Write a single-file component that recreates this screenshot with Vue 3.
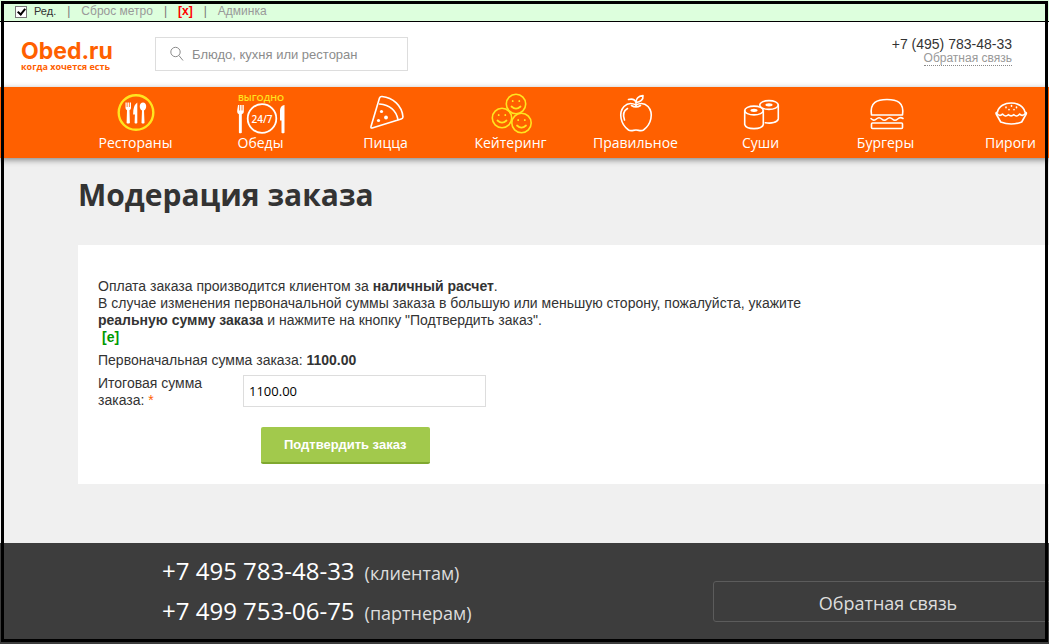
<script setup>
import { ref } from 'vue'

const editMode = ref(true)
const query = ref('')
const total = ref('1100.00')

const categories = [
  { id: 'restaurants', label: 'Рестораны' },
  { id: 'lunch', label: 'Обеды' },
  { id: 'pizza', label: 'Пицца' },
  { id: 'catering', label: 'Кейтеринг' },
  { id: 'healthy', label: 'Правильное' },
  { id: 'sushi', label: 'Суши' },
  { id: 'burgers', label: 'Бургеры' },
  { id: 'pies', label: 'Пироги' },
]

const phones = [
  { number: '+7 495 783-48-33', note: '(клиентам)' },
  { number: '+7 499 753-06-75', note: '(партнерам)' },
]
</script>

<template>
  <div class="page">
    <div class="admin">
      <label class="edit"><input v-model="editMode" type="checkbox" class="tick" />Ред.</label>
      <span class="bar">|</span>
      <a href="#">Сброс метро</a>
      <span class="bar">|</span>
      <a href="#" class="close">[x]</a>
      <span class="bar">|</span>
      <a href="#">Админка</a>
    </div>

    <header class="header">
      <a href="#" class="logo">
        <span class="logo-name">Obed.ru</span>
        <span class="logo-tag">когда хочется есть</span>
      </a>
      <form class="search" @submit.prevent>
        <svg width="14" height="16" viewBox="0 0 14 16" fill="none" stroke="#8a8a8a" aria-hidden="true">
          <circle cx="5.5" cy="6" r="4.7" />
          <path d="M9 9.6 13 14.5" />
        </svg>
        <input v-model="query" type="text" aria-label="Поиск" placeholder="Блюдо, кухня или ресторан" />
      </form>
      <div class="contact">
        <span class="contact-phone">+7 (495) 783-48-33</span>
        <a href="#">Обратная связь</a>
      </div>
    </header>

    <nav class="nav">
      <a v-for="c in categories" :key="c.id" href="#" class="item">
        <svg class="icon" width="50" height="44" viewBox="0 0 50 44" fill="none" stroke="#fff" stroke-width="1.6" stroke-linecap="round" stroke-linejoin="round" aria-hidden="true">
          <g v-if="c.id === 'restaurants'">
            <circle cx="25" cy="22.5" r="17.3" stroke="#ffe51f" stroke-width="2.4" />
            <g fill="#fff" stroke="none">
              <path d="M14.500 12.500h1.200v4.500h.8v-4.500h1.400v4.500h.8v-4.500h1.300v5.500q0 1.600-1.500 2.300l.4 12.700q-1.700 1-3.300 0l.4-12.700q-1.500-.7-1.500-2.300z" />
              <path d="M26.300 12.600v20.400q-1.500 1-2.700 0l.3-8.500h-1.800q-.3-8.500 4.200-11.900z" />
              <path d="M32 12.500c3.800 0 4.300 6.300 1 8l.5 12.500q-1.600 1-3 0l.5-12.500c-3.300-1.700-2.800-8 1-8z" />
            </g>
          </g>
          <g v-else-if="c.id === 'lunch'">
            <text x="25" y="11" class="tag">ВЫГОДНО</text>
            <circle cx="26" cy="28.5" r="14.3" stroke-width="1.8" />
            <text x="26" y="32.5" class="hours">24/7</text>
            <g fill="#fff" stroke="none">
              <path d="M2 15h1.300v5.500h.8v-5.500h1.500v5.500h.8v-5.500h1.400v7q0 1.500-2 2.200v18.500q-1.800 1.300-2.900 0v-18.500q-1.700-.7-1.700-2.200v-1.500z" />
              <path d="M48.500 15v27.800q-1.600 1-3 0v-12.300h-1.500v-10.500q.5-4.500 4.500-5z" />
            </g>
          </g>
          <g v-else-if="c.id === 'pizza'">
            <path d="M21 6.500c11 1 20 9 21 20.500q-.2 1.500-1.800 2l-29 9q-1.700.3-1.200-1.500l8.500-28.500q.7-1.700 2.500-1.500z" />
            <path d="M18.500 14q15.500 1.500 18.500 15.500" />
            <g fill="#fff" stroke="none"><circle cx="20.5" cy="21.5" r="1.6" /><circle cx="25" cy="27.5" r="1.9" /><circle cx="17.5" cy="30.5" r="1.6" /></g>
          </g>
          <g v-else-if="c.id === 'catering'" stroke="#ffe51f">
            <g v-for="p in [[30, 14], [16, 28], [35.5, 33]]" :key="p[0]" :transform="`translate(${p[0]} ${p[1]})`">
              <circle r="9.7" />
              <path d="M-4.500 2.500Q0 6.800 4.500 2.500M-3.300-3v.2M3.300-3v.2" stroke-width="1.8" />
            </g>
          </g>
          <g v-else-if="c.id === 'healthy'">
            <path d="M25 15c-3-1.500-8-2.500-12 1.500-6 6.500-3.200 18 4.500 23.500 2.500 1.600 5 0 7.500 0s5 1.600 7.500 0c7.700-5.500 10.500-17 4.500-23.500-4-4-9-3-12-1.500z" />
            <path d="M20.500 15.500q4.500 3 9 0M25 16v-3.500q-1.500-4.500-7.500-3M25 12.500c0-4.500 2.500-6.500 7-7 .5 4-2.500 6.500-7 7zM13.500 30q-3-8 3-11.500" />
          </g>
          <g v-else-if="c.id === 'sushi'">
            <ellipse cx="33" cy="15" rx="9.3" ry="4.4" /><ellipse cx="33" cy="14.8" rx="2.8" ry=".8" />
            <path d="M42.300 15v14c-1 3.500-7 4.800-13 3.700" />
            <ellipse cx="18" cy="20.500" rx="9.3" ry="4.4" /><ellipse cx="18" cy="20.300" rx="2.8" ry=".8" />
            <path d="M8.700 20.500v14c1.500 5.500 17.100 5.500 18.600 0v-14" />
          </g>
          <g v-else-if="c.id === 'burgers'">
            <path d="M10.500 25c-2-13 6-15.500 15.500-15.500s17.500 2.500 15.500 15.500zM10 28.500q2.700 3 5.400.5 2.600-2.500 5.300 0t5.300 0q2.600-2.500 5.300 0t5.300 0q2.700-2.500 5.400-.5" />
            <rect x="10.500" y="33" width="31" height="5.5" rx="1" />
          </g>
          <g v-else>
            <path d="M11.500 22q-2 .5-1.300 2l4.500 8q10.500 4 21 0l4.500-8q.7-1.500-1.300-2c-2.500-12-25-12-27.400 0z" />
            <path d="M11 23.500q3 3.500 5.500.5 3 3.500 5.800.7 2.800 2.500 5.600 0 2.800 2.800 5.800-.7 2.500 3 5.500-.5M20 17v.8M25.500 15.500v.8M30.500 17v.8M23 19.500v.3M28 19.500v.3" />
          </g>
        </svg>
        <span>{{ c.label }}</span>
      </a>
    </nav>

    <main class="main">
      <h1>Модерация заказа</h1>
      <section class="card">
        <p>
          Оплата заказа производится клиентом за <b>наличный расчет</b>.<br />
          В случае изменения первоначальной суммы заказа в большую или меньшую сторону, пожалуйста, укажите
          <b>реальную сумму заказа</b> и нажмите на кнопку "Подтвердить заказ".
        </p>
        <a href="#" class="edit-link">[e]</a>
        <p class="initial">Первоначальная сумма заказа: <b>1100.00</b></p>
        <form @submit.prevent>
          <div class="field">
            <label for="total">Итоговая сумма заказа: <span class="star">*</span></label>
            <input id="total" v-model="total" type="text" />
          </div>
          <button type="submit">Подтвердить заказ</button>
        </form>
      </section>
    </main>

    <footer class="footer">
      <div class="phones">
        <div v-for="p in phones" :key="p.number" class="phone">{{ p.number }} <small>{{ p.note }}</small></div>
      </div>
      <a href="#" class="feedback">Обратная связь</a>
    </footer>
    <div class="frame"></div>
  </div>
</template>

<style>
body {
  margin: 0;
}
</style>

<style scoped>
.page {
  position: relative;
  display: flex;
  flex-direction: column;
  min-height: 100vh;
  overflow: hidden;
  box-sizing: border-box;
  background: #f0f0f0;
  color: #333;
  font: 14px/17px "Liberation Sans", Arial, sans-serif;
}
.frame {
  position: absolute;
  inset: 1px 1px 2px 1px;
  border: 3px solid #000;
  pointer-events: none;
}
.admin {
  display: flex;
  align-items: center;
  gap: 11px;
  box-sizing: border-box;
  height: 22px;
  padding: 2px 0 0 15px;
  border-bottom: 1px solid #000;
  background: #dfd;
  color: #777;
  font-size: 12px;
}
.admin a {
  color: #999;
  text-decoration: none;
}
.admin .close {
  color: #f00;
  font-weight: bold;
}
.edit {
  display: flex;
  align-items: center;
  gap: 7px;
  color: #333;
  font-size: 11px;
}
.tick {
  appearance: none;
  width: 12px;
  height: 12px;
  margin: 0;
  border: 1px solid #777;
  background: #fff;
}
.tick::after {
  content: "";
  display: block;
  width: 3px;
  height: 6px;
  margin: 0 auto;
  border: solid #000;
  border-width: 0 2px 2px 0;
  transform: rotate(40deg);
  visibility: hidden;
}
.tick:checked::after {
  visibility: visible;
}
.header {
  display: flex;
  align-items: flex-start;
  box-sizing: border-box;
  height: 65px;
  padding: 15px 37px 0 21px;
  background: #fff;
}
.logo {
  display: flex;
  flex-direction: column;
  width: 134px;
  padding-top: 3px;
  color: #ff6000;
  font-family: "Open Sans", sans-serif;
  font-weight: bold;
  text-decoration: none;
  white-space: nowrap;
}
.logo-name {
  font-family: Inter, sans-serif;
  font-size: 23px;
  line-height: 22px;
}
.logo-tag {
  font-size: 9px;
  line-height: 9px;
}
.search {
  display: flex;
  align-items: center;
  gap: 8px;
  box-sizing: border-box;
  width: 253px;
  height: 34px;
  padding: 0 14px;
  border: 1px solid #ddd;
}
.search input {
  flex: 1;
  min-width: 0;
  padding: 0;
  border: 0;
  outline: 0;
  background: none;
  font: 13px/17px "Liberation Sans", Arial, sans-serif;
}
.search input::placeholder {
  color: #8c8c8c;
}
.contact {
  display: flex;
  flex-direction: column;
  align-items: flex-end;
  margin-left: auto;
}
.contact-phone {
  font-size: 14px;
  line-height: 14px;
}
.contact a {
  border-bottom: 1px dotted #888;
  color: #999;
  font-size: 12px;
  line-height: 14px;
  text-decoration: none;
}
.nav {
  display: flex;
  height: 71px;
  padding-left: 73px;
  background: #ff6000;
  box-shadow: 0 2px 6px rgba(0, 0, 0, 0.45);
}
.item {
  display: flex;
  flex: none;
  flex-direction: column;
  align-items: center;
  width: 125px;
  padding-top: 3px;
  color: #fff;
  font: 14px/18px "Open Sans", sans-serif;
  text-decoration: none;
}
.icon {
  display: block;
}
.tag,
.hours {
  font-family: "Open Sans", sans-serif;
  font-weight: 600;
  text-anchor: middle;
  stroke: none;
}
.tag {
  fill: #ffe51f;
  font-size: 9px;
}
.hours {
  fill: #fff;
  font-size: 10px;
}
.main {
  padding: 20px 0 59px 78px;
}
h1 {
  margin: 0 0 33px;
  font: bold 30px/34px "Open Sans", sans-serif;
}
.card {
  padding: 33px 20px 20px;
  background: #fff;
}
.card p {
  max-width: 730px;
  margin: 0;
}
.edit-link {
  display: block;
  width: max-content;
  margin-left: 4px;
  color: #090;
  font-weight: bold;
  text-decoration: none;
}
.card .initial {
  margin: 6px 0;
}
.field {
  display: flex;
  align-items: flex-start;
}
.field label {
  width: 145px;
  padding-right: 30px;
  box-sizing: border-box;
}
.star {
  color: #ff6000;
}
.field input {
  box-sizing: border-box;
  width: 243px;
  height: 32px;
  padding: 0 5px;
  border: 1px solid #ddd;
  background: #fff;
  color: #000;
  font: 13px/17px "Open Sans", sans-serif;
}
.card button {
  display: block;
  height: 37px;
  margin: 18px 0 0 163px;
  padding: 0 23px;
  border: 0;
  border-bottom: 2px solid #7fa82f;
  border-radius: 2px;
  background: #a2c94c;
  color: #fff;
  font: bold 13px/17px "Liberation Sans", Arial, sans-serif;
}
.footer {
  display: flex;
  flex: 1;
  align-items: flex-start;
  box-sizing: border-box;
  padding: 8px 0 12px 162px;
  background: #3d3d3d;
  color: #fff;
  font-family: "Open Sans", sans-serif;
  white-space: nowrap;
}
.phones {
  flex: none;
  width: 551px;
}
.phone {
  display: flex;
  align-items: baseline;
  gap: 10px;
  font-size: 24px;
  line-height: 40px;
}
.phone small {
  color: #ddd;
  font-size: 18px;
  line-height: 24px;
}
.feedback {
  flex: none;
  box-sizing: border-box;
  width: 350px;
  height: 41px;
  margin-top: 30px;
  border: 1px solid #5c5c5c;
  border-radius: 3px;
  color: #ddd;
  font-size: 18px;
  line-height: 43px;
  text-align: center;
  text-decoration: none;
}
</style>
